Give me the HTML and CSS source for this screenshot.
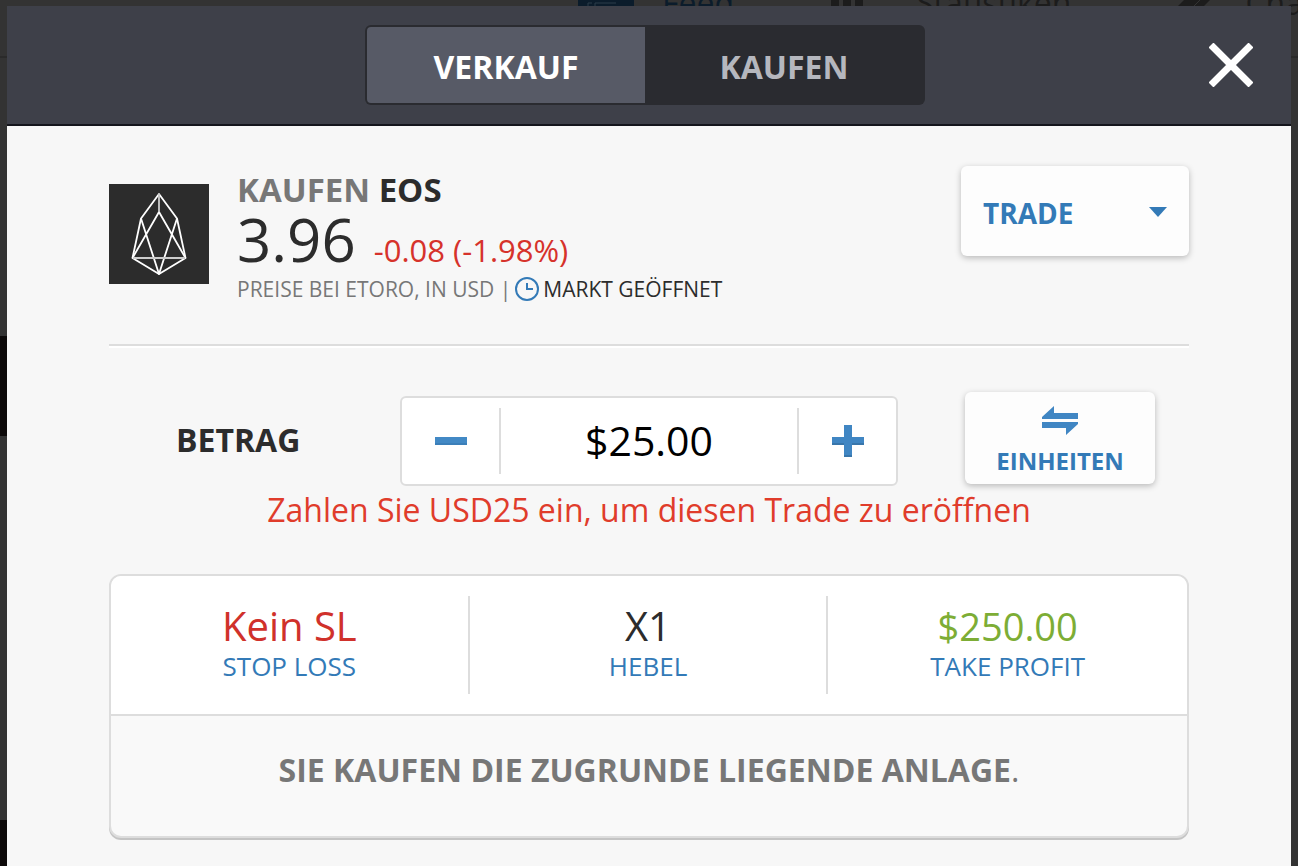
FILE: index.html
```html
<!DOCTYPE html>
<html lang="de">
<head>
    <meta charset="UTF-8">
    <meta name="viewport" content="width=device-width, initial-scale=1.0">
    <title>EOS Trade</title>
    <link rel="stylesheet" href="styles.css">
</head>
<body>
    <!-- Page behind the dialog -->
    <div class="backdrop" aria-hidden="true">
        <div class="page-nav">
            <span class="page-tab active">
                <svg width="56" height="48" viewBox="0 0 56 48"><path fill="currentColor" d="M0 0h56v48H0z"/><path fill="none" stroke="#2c3c4a" stroke-width="1" d="M10 40V24h4M17 40V24h21"/></svg>
                Feed
            </span>
            <span class="page-tab">
                <svg width="58" height="48" viewBox="0 0 58 48"><path fill="currentColor" d="M1 10h8v32H1zM13 10h8v32h-8zM25 10h8v32h-8z"/></svg>
                Statistiken
            </span>
            <span class="page-tab">
                <svg width="50" height="48" viewBox="0 0 50 48"><path fill="currentColor" d="M10 28L20 18h26L36 28z"/><path fill="none" stroke="#333" stroke-width="1" d="M26 28l10-10"/></svg>
                Charts
            </span>
        </div>
        <div class="page-photo first"></div>
        <div class="page-photo second"></div>
    </div>

    <main class="modal">
        <header class="modal-header">
            <div class="toggle">
                <button class="toggle-btn active" type="button">VERKAUF</button>
                <button class="toggle-btn" type="button">KAUFEN</button>
            </div>
            <button class="close-btn" type="button" aria-label="Schließen">
                <svg width="44" height="44" viewBox="0 0 44 44"><path d="M2 2l40 40M42 2L2 42" fill="none" stroke="#fff" stroke-width="7"/></svg>
            </button>
        </header>

        <div class="modal-body">
            <section class="instrument">
                <svg class="logo" width="100" height="100" viewBox="0 0 100 100">
                    <path fill="#2c2c2c" d="M0 0h100v100H0z"/>
                    <g fill="none" stroke="#fff" stroke-width="1.8" stroke-linejoin="round">
                        <path d="M50 10L32 34.500 23.500 74 50 90l26.500-16L68 34.500z"/>
                        <path d="M23.500 74L50 28l26.500 46M32 34.500L50 90l18-55.500"/>
                        <path stroke="#ccc" d="M50 10v18M24 74h52"/>
                    </g>
                </svg>
                <div class="info">
                    <h1 class="name"><span>KAUFEN</span> EOS</h1>
                    <p class="quote"><span class="price">3.96</span><span class="change">-0.08 (-1.98%)</span></p>
                    <p class="market">
                        <span>PREISE BEI ETORO, IN USD |</span>
                        <svg width="24" height="24" viewBox="0 0 24 24"><circle cx="12" cy="12" r="11" fill="none" stroke="#337ab7" stroke-width="2"/><path d="M12 6v6h6" fill="none" stroke="#337ab7" stroke-width="2"/></svg>
                        <span class="open">MARKT GEÖFFNET</span>
                    </p>
                </div>
                <div class="order-type">
                    <select class="order-select" aria-label="Auftragsart">
                        <option>TRADE</option>
                        <option>ORDER</option>
                    </select>
                    <svg class="caret" width="18" height="10" viewBox="0 0 18 10"><path fill="#337ab7" d="M0 0h18L9 10z"/></svg>
                </div>
            </section>

            <section class="amount">
                <label class="amount-label" for="amount">BETRAG</label>
                <div class="stepper">
                    <button class="step-btn" type="button" aria-label="Weniger">
                        <svg width="32" height="32" viewBox="0 0 32 32"><path fill="#4289c5" d="M0 12h32v8H0z"/><path fill="#3b7fb9" d="M0 18h32v2H0z"/></svg>
                    </button>
                    <input class="amount-input" id="amount" type="text" value="$25.00">
                    <button class="step-btn" type="button" aria-label="Mehr">
                        <svg width="32" height="32" viewBox="0 0 32 32"><path fill="#4086c3" d="M12 0h8v12h12v8H20v12h-8V20H0v-8h12z"/><path fill="#3876ab" d="M0 18h12v2H0zM20 18h12v2H20zM12 30h8v2h-8z"/></svg>
                    </button>
                </div>
                <button class="units-btn" type="button">
                    <svg width="36" height="29" viewBox="0 0 36 29"><path fill="#4086c3" d="M0 13V11L12 0v7h24v6zM0 16h36v2L24 29v-7H0z"/></svg>
                    EINHEITEN
                </button>
            </section>
            <p class="error">Zahlen Sie USD25 ein, um diesen Trade zu eröffnen</p>

            <section class="card">
                <div class="params">
                    <button class="param" type="button">
                        <span class="value loss">Kein SL</span>
                        <span class="caption">STOP LOSS</span>
                    </button>
                    <button class="param" type="button">
                        <span class="value">X1</span>
                        <span class="caption">HEBEL</span>
                    </button>
                    <button class="param" type="button">
                        <span class="value profit">$250.00</span>
                        <span class="caption">TAKE PROFIT</span>
                    </button>
                </div>
                <p class="note"><strong>SIE KAUFEN DIE ZUGRUNDE LIEGENDE ANLAGE</strong>.</p>
            </section>
        </div>
    </main>
</body>
</html>
```
FILE: styles.css
```css
* {
    box-sizing: border-box;
}
body {
    margin: 0;
    min-height: 100vh;
    display: flex;
    background: #333;
    color: #2c2c2c;
    font-family: "Open Sans", "Noto Sans", sans-serif;
    overflow: hidden;
}
h1, p {
    margin: 0;
}
button, input, select {
    font-family: inherit;
    margin: 0;
    padding: 0;
    border: none;
    background: none;
    cursor: pointer;
}
svg {
    display: block;
    flex: none;
}

/* page behind the dialog */
.backdrop {
    position: absolute;
    inset: 0;
    overflow: hidden;
}
.page-nav {
    position: absolute;
    top: -42px;
    left: 0;
    height: 100px;
    width: 100%;
    padding: 0 0 8px 578px;
    display: flex;
    align-items: center;
    gap: 96px;
    border-bottom: 2px solid #2a2a2a;
    color: #1c1c1c;
    font-size: 32px;
    white-space: nowrap;
}
.page-tab {
    display: flex;
    align-items: center;
    gap: 28px;
    line-height: 48px;
}
.page-tab.active {
    color: #0b1c2b;
}
.page-photo {
    position: absolute;
    left: 0;
    width: 20px;
    background: #0c0909;
}
.page-photo.first {
    top: 336px;
    height: 100px;
}
.page-photo.second {
    top: 820px;
    bottom: 0;
}

/* dialog */
.modal {
    position: relative;
    flex: 1;
    margin: 6px 7px 0;
    background: #f7f7f7;
}
.modal-header {
    display: grid;
    grid-template-columns: 1fr 560px 1fr;
    align-items: center;
    height: 120px;
    padding: 0 38px 0 30px;
    background: #3e4049;
    border-bottom: 2px solid #14151c;
}
.toggle {
    grid-column: 2;
    display: flex;
    height: 80px;
    padding: 2px;
    background: #2a2b30;
    border-radius: 6px;
}
.toggle-btn {
    flex: 1;
    color: #b5b7be;
    font-size: 32px;
    font-weight: 700;
    line-height: 44px;
    padding-top: 4px;
}
.toggle-btn.active {
    background: #575a66;
    color: #fff;
    border-radius: 4px 0 0 4px;
}
.close-btn {
    justify-self: end;
}
.modal-body {
    padding: 40px 102px 28px;
}
.instrument {
    display: flex;
    align-items: flex-start;
    height: 180px;
    border-bottom: 2px solid #ddd;
    box-shadow: 0 2px 0 #fff;
}
.logo {
    margin: 18px 28px 0 0;
}
.info {
    flex: 1;
}
.name {
    font-size: 33px;
    line-height: 48px;
}
.name span {
    color: #777;
}
.quote {
    display: flex;
    align-items: baseline;
    gap: 18px;
    line-height: 50px;
}
.price {
    font-size: 60px;
}
.change {
    color: #d6322b;
    font-size: 31px;
}
.market {
    display: flex;
    align-items: center;
    gap: 4px;
    color: #777;
    font-size: 21px;
    line-height: 28px;
}
.market .open {
    color: #2c2c2c;
}
.order-type {
    position: relative;
}
.order-select {
    appearance: none;
    width: 228px;
    height: 90px;
    padding: 4px 22px 0;
    background: #fdfdfd;
    border-radius: 6px;
    box-shadow: 0 2px 6px rgba(0, 0, 0, 0.25);
    color: #337ab7;
    font-size: 28px;
    font-weight: 700;
}
.caret {
    position: absolute;
    right: 22px;
    top: 41px;
    pointer-events: none;
}

.amount {
    display: grid;
    grid-template-columns: 1fr 498px 190px;
    align-items: start;
    column-gap: 67px;
    padding: 46px 34px 0 67px;
}
.amount-label {
    align-self: center;
    font-size: 32px;
    font-weight: 700;
    line-height: 44px;
    padding-top: 2px;
}
.stepper {
    display: flex;
    align-items: center;
    height: 90px;
    margin-top: 4px;
    background: #fff;
    border: 2px solid #ddd;
    border-radius: 6px;
}
.step-btn {
    display: flex;
    justify-content: center;
    width: 97px;
}
.amount-input {
    flex: 1;
    min-width: 0;
    height: 66px;
    padding-bottom: 2px;
    border: solid #ddd;
    border-width: 0 2px;
    color: #000;
    font-size: 41px;
    text-align: center;
}
.units-btn {
    display: flex;
    flex-direction: column;
    align-items: center;
    gap: 8px;
    height: 92px;
    padding-top: 14px;
    background: #fdfdfd;
    border-radius: 6px;
    box-shadow: 0 2px 6px rgba(0, 0, 0, 0.25);
    color: #337ab7;
    font-size: 24px;
    font-weight: 700;
    line-height: 36px;
}
.error {
    color: #e03c2b;
    font-size: 32px;
    line-height: 44px;
    text-align: center;
    padding-top: 2px;
}

.card {
    margin-top: 42px;
    background: #f9f9f9;
    border: 2px solid #ddd;
    border-radius: 12px;
    box-shadow: 0 2px 0 #c4c4c4;
    overflow: hidden;
}
.params {
    display: grid;
    grid-template-columns: repeat(3, 1fr);
    align-items: center;
    height: 140px;
    background: #fff;
    border-bottom: 2px solid #ddd;
}
.param {
    display: flex;
    flex-direction: column;
    align-items: center;
    justify-content: center;
    height: 98px;
    padding-bottom: 2px;
    border-right: 2px solid #ddd;
}
.param:last-child {
    border-right: none;
}
.value {
    color: #2c2c2c;
    font-size: 40px;
    line-height: 44px;
}
.value.loss {
    color: #d0312b;
}
.value.profit {
    color: #7dad35;
    font-size: 38px;
}
.caption {
    color: #337ab7;
    font-size: 26px;
    line-height: 36px;
}
.note {
    color: #777;
    font-size: 32px;
    line-height: 44px;
    padding: 32px 0 44px;
    text-align: center;
}
```
